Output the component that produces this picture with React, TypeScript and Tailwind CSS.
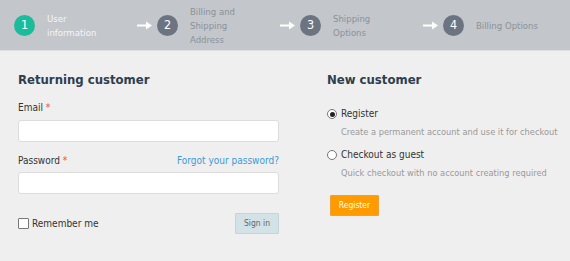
import React from "react";

const font = { fontFamily: '"DejaVu Sans Condensed", "DejaVu Sans", Verdana, sans-serif' };

function Arrow() {
  return (
    <svg width="15" height="9" viewBox="0 0 15 9" className="shrink-0">
      <rect x="0" y="3.5" width="10" height="2" fill="#ffffff" />
      <path d="M9 0.5 L15 4.5 L9 8.5 Z" fill="#ffffff" />
    </svg>
  );
}

function Step({ n, active, lines, last }: { n: number; active?: boolean; lines: string[]; last?: boolean }) {
  return (
    <div className="flex items-center shrink-0">
      <div
        className={
          "w-[21px] h-[21px] rounded-full flex items-center justify-center text-white text-[12.5px] shrink-0 " +
          (active ? "bg-[#1abc9c]" : "bg-[#6c7482]")
        }
      >
        {n}
      </div>
      <div
        className={
          "ml-[12px] w-[90px] text-[9.5px] leading-[14px] pt-[1px] " + (active ? "text-[#f4f6f7]" : "text-[#8b929b]")
        }
      >
        {lines.map((l) => (
          <div key={l}>{l}</div>
        ))}
      </div>
      {!last && (
        <div className="mr-[5px]">
          <Arrow />
        </div>
      )}
    </div>
  );
}

export default function App() {
  return (
    <div className="w-[570px] h-[261px] bg-[#efefef] overflow-hidden" style={font}>
      <div className="h-[51px] bg-[#c3c6ca] border-b border-[#dcdee0] flex items-center pl-[14px]">
        <Step n={1} active lines={["User", "information"]} />
        <Step n={2} lines={["Billing and", "Shipping", "Address"]} />
        <Step n={3} lines={["Shipping", "Options"]} />
        <Step n={4} lines={["Billing Options"]} last />
      </div>

      <div className="flex px-[18px] pt-[20px]">
        <div className="w-[261px] shrink-0">
          <h2 className="text-[13px] font-bold text-[#2c3e50] leading-[18px]">Returning customer</h2>
          <div className="mt-[12px] text-[10px] text-[#333] leading-[14px]">
            Email <span className="text-[#e74c3c]">*</span>
          </div>
          <input className="mt-[5px] block w-full h-[22px] bg-white border border-[#dcdcdc] rounded-[3px] outline-none" />
          <div className="mt-[12px] flex justify-between text-[10px] leading-[14px]">
            <span className="text-[#333]">
              Password <span className="text-[#e74c3c]">*</span>
            </span>
            <a className="text-[#3a9ad9]">Forgot your password?</a>
          </div>
          <input
            type="password"
            className="mt-[4px] block w-full h-[22px] bg-white border border-[#dcdcdc] rounded-[3px] outline-none"
          />
          <div className="mt-[19px] flex items-center justify-between">
            <label className="flex items-center text-[10px] text-[#333]">
              <span className="w-[11px] h-[11px] border border-[#777] bg-white rounded-[1px] mr-[3px]" />
              Remember me
            </label>
            <button className="w-[44px] h-[21px] bg-[#d3e2e6] border border-[#c3d5da] text-[8.5px] text-[#666] rounded-[1px]">
              Sign in
            </button>
          </div>
        </div>

        <div className="ml-[48px] flex-1 whitespace-nowrap">
          <h2 className="text-[13px] font-bold text-[#2c3e50] leading-[18px]">New customer</h2>
          <div className="mt-[18px] flex items-center text-[10px] text-[#333] leading-[14px]">
            <span className="w-[10px] h-[10px] rounded-full border border-[#777] bg-white flex items-center justify-center mr-[4px]">
              <span className="w-[5px] h-[5px] rounded-full bg-[#222]" />
            </span>
            Register
          </div>
          <div className="mt-[4px] ml-[14px] text-[9.2px] text-[#999] leading-[14px]">
            Create a permanent account and use it for checkout
          </div>
          <div className="mt-[9px] flex items-center text-[10px] text-[#333] leading-[14px]">
            <span className="w-[10px] h-[10px] rounded-full border border-[#777] bg-white mr-[4px]" />
            Checkout as guest
          </div>
          <div className="mt-[4px] ml-[14px] text-[9.2px] text-[#999] leading-[14px]">
            Quick checkout with no account creating required
          </div>
          <button className="mt-[15px] ml-[3px] w-[49px] h-[21px] bg-[#ff9a00] border border-[#f0a030] text-white text-[8.5px] rounded-[1px]">
            Register
          </button>
        </div>
      </div>
    </div>
  );
}
